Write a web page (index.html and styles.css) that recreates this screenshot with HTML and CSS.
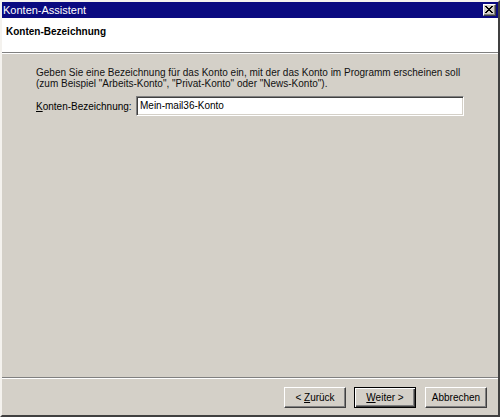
FILE: index.html
```html
<!DOCTYPE html>
<html>
<head>
<meta charset="utf-8">
<link rel="stylesheet" href="styles.css">
</head>
<body>
<div class="window">
  <div class="titlebar">
    <span class="title">Konten-Assistent</span>
    <span class="close"><svg width="8" height="7" viewBox="0 0 8 7"><path d="M0 0h2v1h1v1h2V1h1V0h2v1H7v1H6v1H5v1h1v1h1v1h1v1H6V6H5V5H3v1H2v1H0V6h1V5h1V4h1V3H2V2H1V1H0z" fill="#000"/></svg></span>
  </div>
  <div class="header">
    <span class="heading">Konten-Bezeichnung</span>
  </div>
  <div class="content">
    <p class="desc">Geben Sie eine Bezeichnung für das Konto ein, mit der das Konto im Programm erscheinen soll<br>(zum Beispiel "Arbeits-Konto", "Privat-Konto" oder "News-Konto").</p>
    <div class="field">
      <label class="label"><u>K</u>onten-Bezeichnung:</label>
      <div class="input">Mein-mail36-Konto</div>
    </div>
  </div>
  <div class="footer">
    <button class="btn"><span>&lt; <u>Z</u>urück</span></button>
    <button class="btn default"><span><u>W</u>eiter &gt;</span></button>
    <button class="btn cancel"><span>Abbrechen</span></button>
  </div>
</div>
</body>
</html>
```
FILE: styles.css
```css
html, body {
  margin: 0;
  padding: 0;
  background: #d4d0c8;
}
body {
  font-family: "Liberation Sans", Arial, sans-serif;
  font-size: 10px;
  color: #000;
}
.window {
  width: 500px;
  height: 417px;
  box-sizing: border-box;
  border-style: solid;
  border-width: 2px;
  border-color: #f4f2ee #404040 #404040 #f4f2ee;
  background: #d4d0c8;
  display: flex;
  flex-direction: column;
}
.titlebar {
  height: 16px;
  background: #0a0a80;
  display: flex;
  align-items: center;
  justify-content: space-between;
  padding: 0 2px 0 1px;
}
.title {
  color: #fff;
  font-size: 11px;
  line-height: 16px;
}
.close {
  width: 13px;
  height: 12px;
  box-sizing: border-box;
  background: #d4d0c8;
  border-style: solid;
  border-width: 1px;
  border-color: #fff #404040 #404040 #fff;
  box-shadow: inset -1px -1px 0 #808080;
  display: flex;
  align-items: center;
  justify-content: center;
}
.close svg {
  display: block;
  margin: 0 1px 1px 0;
}
.header {
  height: 35px;
  background: #fff;
  border-bottom: 1px solid #808080;
  box-shadow: 0 1px 0 #fff;
  padding: 7px 0 0 4px;
  box-sizing: border-box;
}
.heading {
  font-weight: bold;
  font-size: 10px;
  line-height: 14px;
}
.content {
  flex: 1;
  padding: 13px 0 0 34px;
  margin-top: 1px;
}
.desc {
  margin: 0;
  line-height: 11px;
  color: #111;
}
.field {
  display: flex;
  align-items: center;
  margin-top: 7px;
}
.label {
  width: 100px;
}
.input {
  width: 328px;
  height: 20px;
  box-sizing: border-box;
  background: #fff;
  border-style: solid;
  border-width: 1px;
  border-color: #808080 #fff #fff #808080;
  box-shadow: inset 1px 1px 0 #404040, inset -1px -1px 0 #d4d0c8;
  padding: 0 3px;
  line-height: 18px;
}
.footer {
  height: 38px;
  border-top: 1px solid #808080;
  box-shadow: inset 0 1px 0 #fff;
  display: flex;
  justify-content: flex-end;
  align-items: flex-start;
  padding: 9px 11px 0 0;
  box-sizing: border-box;
  gap: 8px;
}
.btn {
  width: 62px;
  height: 21px;
  box-sizing: border-box;
  background: #d4d0c8;
  font-family: "Liberation Sans", Arial, sans-serif;
  font-size: 10px;
  color: #000;
  border-style: solid;
  border-width: 1px;
  border-color: #fff #404040 #404040 #fff;
  box-shadow: inset -1px -1px 0 #808080;
  padding: 0;
  margin: 0;
  display: flex;
  align-items: center;
  justify-content: center;
}
.btn.default {
  border-color: #000;
  box-shadow: inset 1px 1px 0 #fff, inset -1px -1px 0 #404040, inset -2px -2px 0 #808080;
}
.btn.cancel {
  margin-left: 1px;
}
```
